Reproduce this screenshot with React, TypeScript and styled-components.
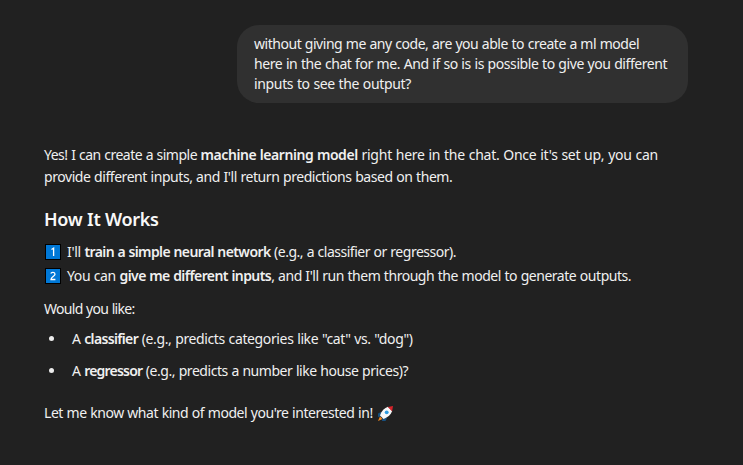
import { createGlobalStyle, styled } from "styled-components";

const GlobalStyle = createGlobalStyle`
  html, body {
    margin: 0;
    height: 100%;
    background: #212121;
  }
  #root {
    height: 100%;
  }
`;

const Page = styled.div`
  height: 465px;
  overflow: hidden;
  box-sizing: border-box;
  padding: 25px 55px 0 44px;
  background: #212121;
  color: #f0f0f0;
  font-family: "Noto Sans", "Open Sans", sans-serif;
  font-size: 14px;
  letter-spacing: -0.4px;
  word-spacing: 0.4px;
  white-space: nowrap;
`;

const UserRow = styled.div`
  display: flex;
  justify-content: flex-end;
`;

const Bubble = styled.div`
  box-sizing: border-box;
  width: 451px;
  height: 78px;
  padding: 9px 17px;
  border-radius: 22px;
  background: #303030;
  line-height: 20px;
`;

const Reply = styled.div`
  margin-top: 41px;
`;

const Paragraph = styled.p<{ $gap?: number }>`
  margin: 0 0 ${(p) => p.$gap ?? 0}px;
  line-height: 22.4px;
`;

const Heading = styled.h3`
  margin: 0 0 9px;
  font-size: 18px;
  line-height: 24px;
  font-weight: 600;
  letter-spacing: -0.33px;
  color: #f8f8f8;
`;

const Steps = styled.div`
  margin-bottom: 10px;
`;

const Step = styled.div`
  display: flex;
  align-items: center;
  gap: 6px;
  height: 24px;
  padding-left: 1px;
`;

const Bullets = styled.ul`
  list-style: none;
  margin: 0 0 15px;
  padding: 0;
`;

const Bullet = styled.li`
  position: relative;
  padding-left: 28px;
  height: 32px;
  line-height: 32px;
  &::before {
    content: "";
    position: absolute;
    left: 5px;
    top: 13px;
    width: 5px;
    height: 5px;
    border-radius: 50%;
    background: #ececec;
  }
`;

// the source font is narrower than Noto Sans by a different amount per run
const Run = styled.span<{ $track: number }>`
  letter-spacing: ${(p) => p.$track}px;
`;

const Strong = styled.b<{ $track: number }>`
  font-weight: 600;
  letter-spacing: ${(p) => p.$track}px;
`;

const KeycapIcon = styled.svg`
  flex: none;
  width: 16px;
  height: 16px;
`;

const RocketIcon = styled.svg`
  width: 17px;
  height: 17px;
  margin-left: 1px;
  vertical-align: -4px;
`;

const Keycap = ({ n }: { n: number }) => (
  <KeycapIcon viewBox="0 0 16 16">
    <rect width="16" height="16" fill="#000" />
    <rect x="1" y="1" width="14" height="14" fill="#0078d7" />
    {n === 1 ? (
      <path d="M6.5 5.5L8.6 4.2V12" stroke="#fff" strokeWidth="1.3" fill="none" />
    ) : (
      <path d="M5.8 5.6c.6-1.6 4.2-1.6 4.2.6 0 1.9-4 3-4 5.3h4.4" stroke="#fff" strokeWidth="1.3" fill="none" />
    )}
  </KeycapIcon>
);

const Rocket = () => (
  <RocketIcon viewBox="0 0 17 17">
    <path d="M3 11.5L1 16l4.5-2z" fill="#f58a1f" />
    <path d="M4 7L1 8.5 1 12 4 11.5zM10 13L8.5 16 5 16 5.5 13z" fill="#17507f" />
    <path d="M3 10.5C4.5 6 7.5 3 11 1.8L15.2 6C14 9.5 11 12.5 6.5 14z" fill="#f7f7f7" />
    <circle cx="9.7" cy="7.3" r="1.9" fill="#2d9be0" />
    <path d="M10.8 1.9L16 1l-.9 5.2z" fill="#d8232a" />
  </RocketIcon>
);

export default function App() {
  return (
    <Page>
      <GlobalStyle />
      <UserRow>
        <Bubble>
          <Run $track={-0.465}>without giving me any code, are you able to create a ml model</Run>
          <br />
          <Run $track={-0.42}>here in the chat for me. And if so is is possible to give you different</Run>
          <br />
          <Run $track={-0.35}>inputs to see the output?</Run>
        </Bubble>
      </UserRow>
      <Reply>
        <Paragraph $gap={18}>
          <Run $track={-0.5}>Yes! I can create a simple </Run>
          <Strong $track={-0.44}>machine learning model</Strong>
          <Run $track={-0.25}> right here in the chat. Once it's set up, you can</Run>
          <br />
          <Run $track={-0.44}>provide different inputs, and I'll return predictions based on them.</Run>
        </Paragraph>
        <Heading>How It Works</Heading>
        <Steps>
          <Step>
            <Keycap n={1} />
            <span>
              <Run $track={-0.35}>I'll </Run>
              <Strong $track={-0.6}>train a simple neural network</Strong>
              <Run $track={-0.49}> (e.g., a classifier or regressor).</Run>
            </span>
          </Step>
          <Step>
            <Keycap n={2} />
            <span>
              <Run $track={-0.4}>You can </Run>
              <Strong $track={-0.57}>give me different inputs</Strong>
              <Run $track={-0.465}>, and I'll run them through the model to generate outputs.</Run>
            </span>
          </Step>
        </Steps>
        <Paragraph $gap={3}>
          <Run $track={-0.68}>Would you like:</Run>
        </Paragraph>
        <Bullets>
          <Bullet>
            A <Strong $track={-0.65}>classifier</Strong>
            <Run $track={-0.37}> (e.g., predicts categories like "cat" vs. "dog")</Run>
          </Bullet>
          <Bullet>
            A <Strong $track={-0.8}>regressor</Strong>
            <Run $track={-0.45}> (e.g., predicts a number like house prices)?</Run>
          </Bullet>
        </Bullets>
        <Paragraph>
          <Run $track={-0.45}>Let me know what kind of model you're interested in! </Run>
          <Rocket />
        </Paragraph>
      </Reply>
    </Page>
  );
}
